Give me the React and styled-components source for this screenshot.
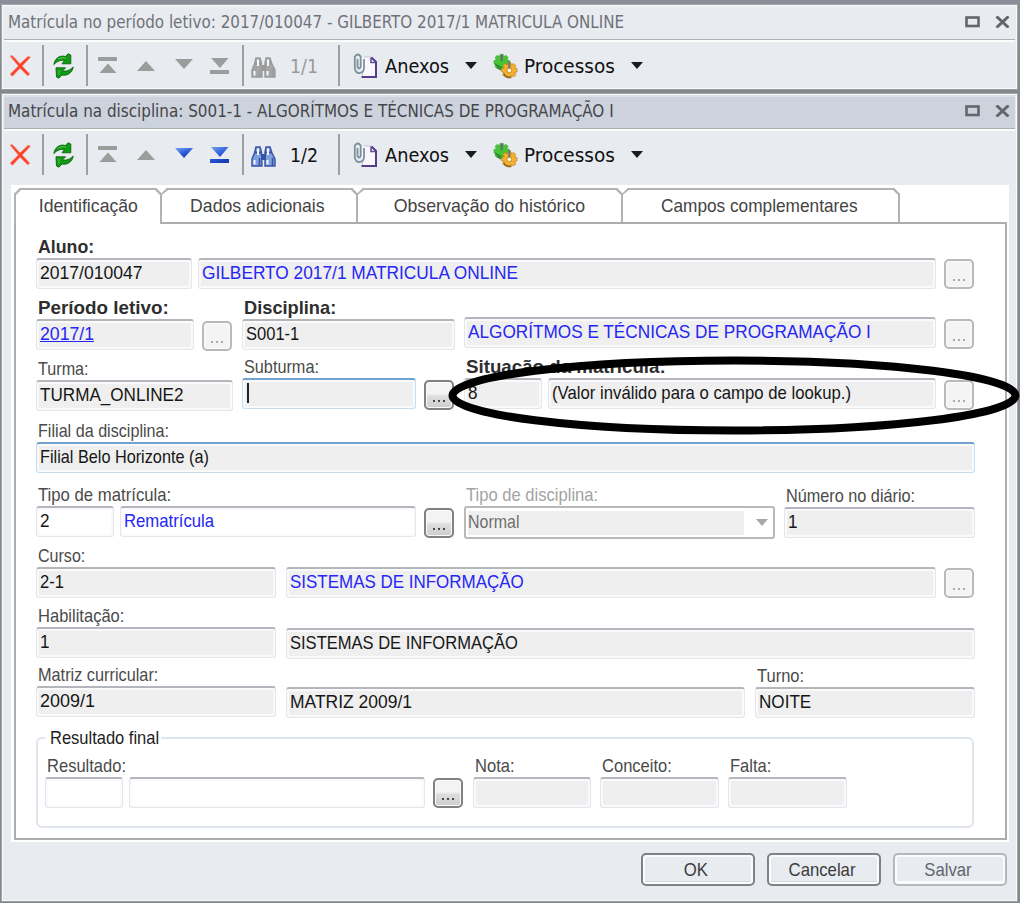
import React from 'react';
import styled, { createGlobalStyle, css } from 'styled-components';

const Global = createGlobalStyle`
  * { box-sizing: border-box; }
  html, body { margin: 0; padding: 0; }
  body { background: #888c94; font-family: "Liberation Sans", Arial, sans-serif; overflow: hidden; }
`;

const Screen = styled.div`
  position: relative;
  width: 1020px;
  height: 903px;
  padding: 4px 2px 1px 1px;
  background: linear-gradient(#8a8e98 0, #84888c 100px, #84888c 100%);
  display: flex;
  flex-direction: column;
  gap: 3px;
  overflow: hidden;
`;

const Win = styled.section`
  width: 1017px;
  height: ${(p) => p.$h}px;
  background: #e8ebf0;
  border: 1px solid #a4a7aa;
  border-bottom-color: #9a9da0;
  box-shadow: inset 0 0 0 1px #f6f8fa;
  display: flex;
  flex-direction: column;
`;

const TitleBar = styled.header`
  height: 34px;
  margin: 1px 2px 0;
  padding: 0 5px 2px 4px;
  flex: none;
  display: flex;
  align-items: center;
  justify-content: space-between;
  background: ${(p) => (p.$active ? '#cdd3dc' : '#e8ebf0')};
  border-bottom: 1px solid #adafb0;
  box-shadow: 0 2px 0 #fafcfb, inset 0 2px 0 ${(p) => (p.$active ? '#dce0e6' : '#ebeef2')};
  color: ${(p) => (p.$active ? '#45464b' : '#70727a')};
`;

const Scaled = styled.span`
  display: inline-block;
  white-space: pre;
  text-decoration: inherit;
  transform: scaleX(${(p) => p.$sx});
  transform-origin: ${(p) => p.$origin || 'left'} center;
`;

const Title = styled(Scaled)`
  font: 17px/30px "DejaVu Sans Condensed", "DejaVu Sans", sans-serif;
`;

const WinControls = styled.div`
  display: flex;
  align-items: center;
  gap: 15px;
`;

const Toolbar = styled.div`
  display: flex;
  align-items: center;
  height: 45px;
  margin-top: 3px;
  padding-left: 6px;
  font: 19px/24px "DejaVu Sans Condensed", "DejaVu Sans", sans-serif;
  color: #111;
  flex: none;
`;

const Slot = styled.div`
  width: ${(p) => p.$w}px;
  height: 26px;
  display: flex;
  align-items: center;
  flex: none;
`;

const IconPad = styled.div`
  display: flex;
  padding: ${(p) => p.$t || 0}px 0 ${(p) => p.$b || 0}px ${(p) => p.$l || 0}px;
`;

const Count = styled(Scaled)`
  color: ${(p) => (p.$on ? '#111' : '#999')};
`;

const Separator = styled.div`
  width: 2px;
  height: 41px;
  margin-top: -1px;
  background: #9d9fa1;
  flex: none;
`;

const Caret = styled.div`
  border: 6px solid transparent;
  border-top: 7px solid #1b1b1b;
  border-bottom: 0;
`;

const TabHost = styled.main`
  width: 998px;
  height: 657px;
  margin: 8px 0 0 9px;
  padding: 3px 2px 2px 3px;
  background: #fff;
  display: flex;
  flex-direction: column;
  flex: none;
`;

const Tabs = styled.div`
  display: flex;
  height: 34px;
  flex: none;
`;

const Tab = styled.div`
  width: ${(p) => p.$w}px;
  height: ${(p) => (p.$on ? 36 : 34)}px;
  z-index: ${(p) => (p.$on ? 1 : 0)};
  margin-right: -1px;
  padding-top: 5px;
  padding-right: ${(p) => p.$pr || 0}px;
  text-align: center;
  background: #fff;
  border: 2px solid #b2b2b2;
  border-left-width: ${(p) => (p.$on ? 2 : 1)}px;
  border-bottom: 0;
  border-radius: 6px 6px 0 0;
  corner-shape: bevel;
  font-size: 19px;
  line-height: 22px;
  color: #444;
`;

const Page = styled.div`
  height: 619px;
  border: 2px solid #adadad;
  padding: 12px 20px 0;
`;

const Row = styled.div`
  display: flex;
  align-items: flex-start;
  height: ${(p) => p.$h}px;
`;

const Group = styled.div`
  width: ${(p) => p.$w}px;
  margin-left: ${(p) => p.$ml || 0}px;
  margin-top: ${(p) => p.$dy || 0}px;
  flex: none;
`;

const Label = styled.div`
  height: 22px;
  padding-left: 2px;
  font-size: 19px;
  line-height: 22px;
  white-space: nowrap;
  font-weight: ${(p) => (p.$bold ? 700 : 400)};
  color: ${(p) => (p.$dim ? '#a3a3a3' : p.$bold ? '#2e2e2e' : '#4a4a4a')};
`;

const Box = styled.div`
  height: 31px;
  padding: 3px 0 0 3px;
  border: 1px solid #e2e6ee;
  border-top: 2px solid #b4b6bd;
  border-radius: 3px;
  background: ${(p) => (p.$edit ? '#fff' : '#efefef')};
  box-shadow: inset 0 0 0 2px #fafafb;
  font-size: 19px;
  line-height: 20px;
  white-space: nowrap;
  color: ${(p) => (p.$blue ? '#2626f5' : '#161616')};
  text-decoration: ${(p) => (p.$link ? 'underline' : 'none')};
  ${(p) =>
    p.$focus &&
    css`
      border-color: #c5dff0;
      border-top-color: #6fa3cd;
    `}
`;

const Dots = styled.button`
  width: 30px;
  height: 30px;
  padding: 0;
  margin: ${(p) => (p.$dy === undefined ? 23 : p.$dy)}px 0 0 ${(p) => (p.$ml === undefined ? 8 : p.$ml)}px;
  flex: none;
  border-radius: 5px;
  border: 2px solid ${(p) => (p.$on ? '#818181' : '#b7b9bc')};
  background: ${(p) => (p.$on ? 'linear-gradient(#f3f3f3 0 45%, #dedede 55%, #cdcdcd)' : '#f4f4f4')};
  box-shadow: inset 0 0 0 1px #fbfbfb;
  display: flex;
  align-items: flex-end;
  justify-content: center;
  gap: 3px;
  padding-bottom: 6px;
  i {
    width: 2px;
    height: 2px;
    background: ${(p) => (p.$on ? '#4b4650' : '#aaa8ae')};
  }
`;

const Cursor = styled.div`
  width: 2px;
  height: 20px;
  margin: 0 0 0 1px;
  background: #222;
`;

const Select = styled.div`
  display: flex;
  align-items: center;
  justify-content: space-between;
  height: 33px;
  border: 2px solid #b9b9b9;
  border-radius: 3px;
  padding: 0 5px 0 2px;
  background: #fff;
`;

const SelectValue = styled.div`
  width: 276px;
  height: 24px;
  background: #efefef;
  font-size: 19px;
  line-height: 21px;
  color: #6f6f6f;
`;

const GrayCaret = styled.div`
  border: 6px solid transparent;
  border-top: 7px solid #a8a8a8;
  border-bottom: 0;
`;

const Fieldset = styled.fieldset`
  width: 938px;
  height: 101px;
  margin: 0;
  padding: 6px 0 0 7px;
  border: 2px solid #dfe5ec;
  border-radius: 6px;
`;

const Legend = styled.legend`
  width: 116px;
  height: 22px;
  margin-left: 0;
  padding: 0 0 0 5px;
  font-size: 19px;
  line-height: 22px;
  white-space: nowrap;
  color: #1d1d1d;
`;

const Footer = styled.footer`
  display: flex;
  gap: 12px;
  justify-content: flex-end;
  padding: 11px 10px 0 0;
`;

const Action = styled.button`
  width: 114px;
  height: 33px;
  padding: 0 4px 0 0;
  border-radius: 5px;
  border: 2px solid ${(p) => (p.$off ? '#b4b8bd' : '#7f8184')};
  background: #e8ebf0;
  box-shadow: inset 0 0 0 2px #fafbfc, inset 0 -3px 0 ${(p) => (p.$off ? '#fafbfc' : '#d3d6da')};
  font: 19px/24px "Liberation Sans", Arial, sans-serif;
  color: ${(p) => (p.$off ? '#5f6570' : '#3c3c3c')};
`;

const Annotation = styled.svg`
  position: absolute;
  left: 440px;
  top: 350px;
  pointer-events: none;
`;

const MaxIcon = () => (
  <svg width="15" height="12" viewBox="0 0 15 12">
    <rect x="1.5" y="1.5" width="12" height="8.5" fill="none" stroke="#63666c" strokeWidth="2.6" />
  </svg>
);
const CloseIcon = () => (
  <svg width="15" height="12" viewBox="0 0 15 12">
    <path d="M1.5 .5 13.5 11.5M13.5 .5 1.5 11.5" stroke="#63666c" strokeWidth="3" />
  </svg>
);
const DeleteIcon = () => (
  <svg width="24" height="24" viewBox="0 0 22 22">
    <path d="M2 2Q3.500 .5 5.500 3L11 9 18.500 2 20.500 3 13 11 20 18.500 18 20 11 13 4 20.500 2 18.500 9.500 11Z" fill="#f8402a" stroke="#ff8b72" strokeWidth=".7" />
  </svg>
);
const RefreshIcon = () => (
  <svg width="21" height="26" viewBox="0 0 21 26">
    <g stroke="#0b640d" strokeWidth=".9">
      <path d="M.8 11.500C2 5.500 6.500 1.800 12.500 3.500L15 .8 17.800 2V10.800H9L11.500 7.500C8 6.800 4.500 8 .8 11.500Z" fill="#0f9a12" />
      <path d="M20.200 14C19.500 19 15 23.300 9 22L6 25.200 3.500 24 3 14.800H12.500L9.500 18C13 18.500 17 17.500 20.200 14Z" fill="#0f9a12" />
    </g>
    <path d="M5 6.200Q9 3.500 13 5.300M6 17V21.500" stroke="#4cc04a" fill="none" strokeWidth="1.200" />
  </svg>
);

const navShapes = {
  first: 'M0 0H19V4H0ZM1.500 16H18.500L10 6.500Z',
  prev: 'M0 14H18L9 4Z',
  next: 'M0 3H18L9 13Z',
  last: 'M1 0H18.500L10 10ZM0 12H19V16H0Z',
};
const NavIcon = ({ kind, on }) => (
  <svg width="20" height="17" viewBox="0 0 20 17">
    <defs>
      <linearGradient id="navBlue" x1="0" y1="0" x2=".6" y2="1">
        <stop offset="0" stopColor="#73a6f0" />
        <stop offset=".6" stopColor="#2a56d8" />
        <stop offset="1" stopColor="#1b3db5" />
      </linearGradient>
    </defs>
    <path d={navShapes[kind]} fill={on ? 'url(#navBlue)' : '#9c9c9c'} />
  </svg>
);
const BinocularsIcon = ({ on }) => {
  const c = on ? '#3651a6' : '#9a9a9a';
  const f = on ? '#7ea2dc' : '#a6a6a6';
  return (
    <svg width="25" height="22" viewBox="0 0 25 22">
      <path d="M5 1H9L10.500 6 11 20H1V13L3.500 7ZM15 1H19L21 7 24 13V20H14V6Z" fill={f} stroke={c} strokeWidth="1.400" />
      <rect x="10" y="8" width="5" height="6" fill={c} />
      <path d="M3.500 6.500H10M14 6.500H21" stroke={c} strokeWidth="2" />
      <path d="M3.500 14V18.500M16.500 14V18.500M7 2.500V9M17 2.500V9" stroke="#f3f6fc" strokeWidth="2" />
      <path d="M8.500 12V20M21.500 12V20" stroke={c} strokeWidth="1.500" />
    </svg>
  );
};
const AttachIcon = () => (
  <svg width="25" height="26" viewBox="0 0 25 26">
    <path d="M9 4H18.500L23 9V24H9Z" fill="#f7f7fc" />
    <path d="M11 4H18.500M9.500 19V24" stroke="#c3c5d2" />
    <path d="M18 4.500V9.500H23" fill="none" stroke="#6a4f9c" strokeWidth="1.600" />
    <path d="M8.500 24H23V9L18.500 4.500" fill="none" stroke="#573c8c" strokeWidth="2" />
    <path d="M4.500 6V14Q6 17 7.700 14V3.500Q5 -.5 1.800 3.500V15.500Q3 20.500 6.500 20 11 19.500 11 15V6" fill="none" stroke="#7c929f" strokeWidth="1.800" />
  </svg>
);
const gear = 'M-1.7-8H1.7L2.2-5.600 4.400-7.200 6.800-4.800 5.300-2.600 8-1.800V1.700L5.400 2.300 6.800 4.600 4.500 6.900 2.200 5.400 1.700 8H-1.700L-2.300 5.400-4.600 6.900-7 4.500-5.400 2.200-8 1.700V-1.800L-5.300-2.500-6.900-4.800-4.500-7.100-2.200-5.500Z';
const GearsIcon = () => (
  <svg width="25" height="26" viewBox="0 0 26 26">
    <path d={gear} transform="translate(9 9)" fill="#43c534" stroke="#3aa53a" strokeWidth=".6" />
    <path d="M2 11 9 15M4 14 8 17" stroke="#2a7f2d" strokeWidth="1.500" />
    <path d="M9 1V8" stroke="#686c70" strokeWidth="2.400" />
    <path d={gear} transform="translate(17 17.500)" fill="#f4b02e" stroke="#b97f20" strokeWidth=".7" />
    <path d="M11 21 14 24.500H19" stroke="#7d5a1c" strokeWidth="1.300" fill="none" />
    <circle cx="17" cy="17.500" r="2.500" fill="#fff6d8" stroke="#c08a28" />
    <path d="M17 8V15.500" stroke="#77746b" strokeWidth="2.200" />
  </svg>
);

const More = (p) => (
  <Dots aria-label="Procurar" {...p}>
    <i /><i /><i />
  </Dots>
);

function Field({ w, ml, dy, label, lsx = 0.87, value, sx = 0.9, bold, ...box }) {
  return (
    <Group $w={w} $ml={ml} $dy={dy}>
      <Label $bold={bold}>{label && <Scaled $sx={lsx}>{label}</Scaled>}</Label>
      <Box {...box}>
        {value && <Scaled $sx={sx}>{value}</Scaled>}
        {box.$cursor && <Cursor />}
      </Box>
    </Group>
  );
}

function Tools({ on, count }) {
  return (
    <Toolbar>
      <Slot $w={34}><DeleteIcon /></Slot>
      <Separator />
      <Slot $w={42}><IconPad $l={9}><RefreshIcon /></IconPad></Slot>
      <Separator />
      <Slot $w={49}><IconPad $l={10} $b={1}><NavIcon kind="first" /></IconPad></Slot>
      <Slot $w={38}><NavIcon kind="prev" /></Slot>
      <Slot $w={35}><IconPad $b={3}><NavIcon kind="next" on={on} /></IconPad></Slot>
      <Slot $w={32}><IconPad $t={1}><NavIcon kind="last" on={on} /></IconPad></Slot>
      <Separator />
      <Slot $w={46}><IconPad $l={7} $t={5}><BinocularsIcon on={on} /></IconPad></Slot>
      <Slot $w={48}><Count $on={on} $sx={1.02}>{count}</Count></Slot>
      <Separator />
      <Slot $w={45}><IconPad $l={13}><AttachIcon /></IconPad></Slot>
      <Slot $w={80}><Scaled $sx={1.04}>Anexos</Scaled></Slot>
      <Slot $w={28}><Caret /></Slot>
      <Slot $w={31}><GearsIcon /></Slot>
      <Slot $w={107}><Scaled $sx={1.08}>Processos</Scaled></Slot>
      <Slot $w={20}><Caret /></Slot>
    </Toolbar>
  );
}

function Header({ active, sx, children }) {
  return (
    <TitleBar $active={active}>
      <Title $sx={sx}>{children}</Title>
      <WinControls><MaxIcon /><CloseIcon /></WinControls>
    </TitleBar>
  );
}

export default function App() {
  return (
    <>
      <Global />
      <Screen>
        <Win $h={86}>
          <Header sx={0.99}>Matrícula no período letivo: 2017/010047 - GILBERTO 2017/1 MATRICULA ONLINE</Header>
          <Tools count="1/1" />
        </Win>
        <Win $h={809}>
          <Header active sx={0.993}>Matrícula na disciplina: S001-1 - ALGORÍTMOS E TÉCNICAS DE PROGRAMAÇÃO I</Header>
          <Tools on count="1/2" />
          <TabHost>
            <Tabs>
              <Tab $w={148} $on><Scaled $sx={0.93} $origin="center">Identificação</Scaled></Tab>
              <Tab $w={197} $pr={3}><Scaled $sx={0.93} $origin="center">Dados adicionais</Scaled></Tab>
              <Tab $w={266} $pr={1}><Scaled $sx={0.935} $origin="center">Observação do histórico</Scaled></Tab>
              <Tab $w={278} $pr={3}><Scaled $sx={0.908} $origin="center">Campos complementares</Scaled></Tab>
            </Tabs>
            <Page>
              <Row $h={61}>
                <Field w={156} label="Aluno:" lsx={0.935} bold value="2017/010047" sx={0.925} />
                <Field w={738} ml={6} value="GILBERTO 2017/1 MATRICULA ONLINE" sx={0.91} $blue />
                <More />
              </Row>
              <Row $h={59}>
                <Field w={158} label="Período letivo:" lsx={0.99} bold value="2017/1" sx={0.93} $blue $link />
                <More $dy={24} />
                <Field w={213} ml={10} label="Disciplina:" lsx={0.96} bold value="S001-1" sx={0.87} />
                <Field w={472} ml={9} dy={-2} value="ALGORÍTMOS E TÉCNICAS DE PROGRAMAÇÃO I" sx={0.905} $blue />
                <More $dy={22} />
              </Row>
              <Row $h={64}>
                <Field w={197} dy={2} label="Turma:" lsx={0.85} value="TURMA_ONLINE2" />
                <Field w={174} ml={9} label="Subturma:" lsx={0.855} $focus $cursor />
                <More $on $dy={24} />
                <Field w={78} ml={10} label="Situação da matrícula:" lsx={0.985} bold value="8" />
                <Field w={388} ml={6} value="(Valor inválido para o campo de lookup.)" sx={0.88} />
                <More $dy={24} />
              </Row>
              <Row $h={64}>
                <Field w={939} label="Filial da disciplina:" lsx={0.85} value="Filial Belo Horizonte (a)" sx={0.855} $focus />
              </Row>
              <Row $h={61}>
                <Field w={78} label="Tipo de matrícula:" lsx={0.88} value="2" $edit />
                <Field w={296} ml={6} value="Rematrícula" sx={0.88} $edit $blue />
                <More $on $dy={24} />
                <Group $w={311} $ml={10}>
                  <Label $dim><Scaled $sx={0.873}>Tipo de disciplina:</Scaled></Label>
                  <Select>
                    <SelectValue><Scaled $sx={0.84}>Normal</Scaled></SelectValue>
                    <GrayCaret />
                  </Select>
                </Group>
                <Field w={191} ml={9} dy={1} label="Número no diário:" lsx={0.855} value="1" />
              </Row>
              <Row $h={60}>
                <Field w={240} label="Curso:" lsx={0.845} value="2-1" sx={0.87} />
                <Field w={650} ml={10} value="SISTEMAS DE INFORMAÇÃO" sx={0.893} $blue />
                <More />
              </Row>
              <Row $h={59}>
                <Field w={240} label="Habilitação:" value="1" />
                <Field w={689} ml={10} dy={1} value="SISTEMAS DE INFORMAÇÃO" sx={0.87} />
              </Row>
              <Row $h={63}>
                <Field w={240} label="Matriz curricular:" lsx={0.857} value="2009/1" sx={0.945} />
                <Field w={459} ml={10} dy={1} value="MATRIZ 2009/1" sx={0.92} />
                <Field w={220} ml={10} dy={1} label="Turno:" value="NOITE" />
              </Row>
              <Fieldset>
                <Legend><Scaled $sx={0.868}>Resultado final</Scaled></Legend>
                <Row $h={54}>
                  <Field w={78} label="Resultado:" $edit />
                  <Field w={296} ml={6} $edit />
                  <More $on />
                  <Field w={118} ml={10} label="Nota:" />
                  <Field w={119} ml={9} label="Conceito:" />
                  <Field w={119} ml={9} label="Falta:" />
                </Row>
              </Fieldset>
            </Page>
          </TabHost>
          <Footer>
            <Action><Scaled $sx={0.88} $origin="center">OK</Scaled></Action>
            <Action><Scaled $sx={0.88} $origin="center">Cancelar</Scaled></Action>
            <Action $off><Scaled $sx={0.88} $origin="center">Salvar</Scaled></Action>
          </Footer>
        </Win>
        <Annotation width="580" height="92" viewBox="440 350 580 92">
          <ellipse cx="734" cy="395.500" rx="281.500" ry="35" fill="none" stroke="#000" strokeWidth="8" />
        </Annotation>
      </Screen>
    </>
  );
}
